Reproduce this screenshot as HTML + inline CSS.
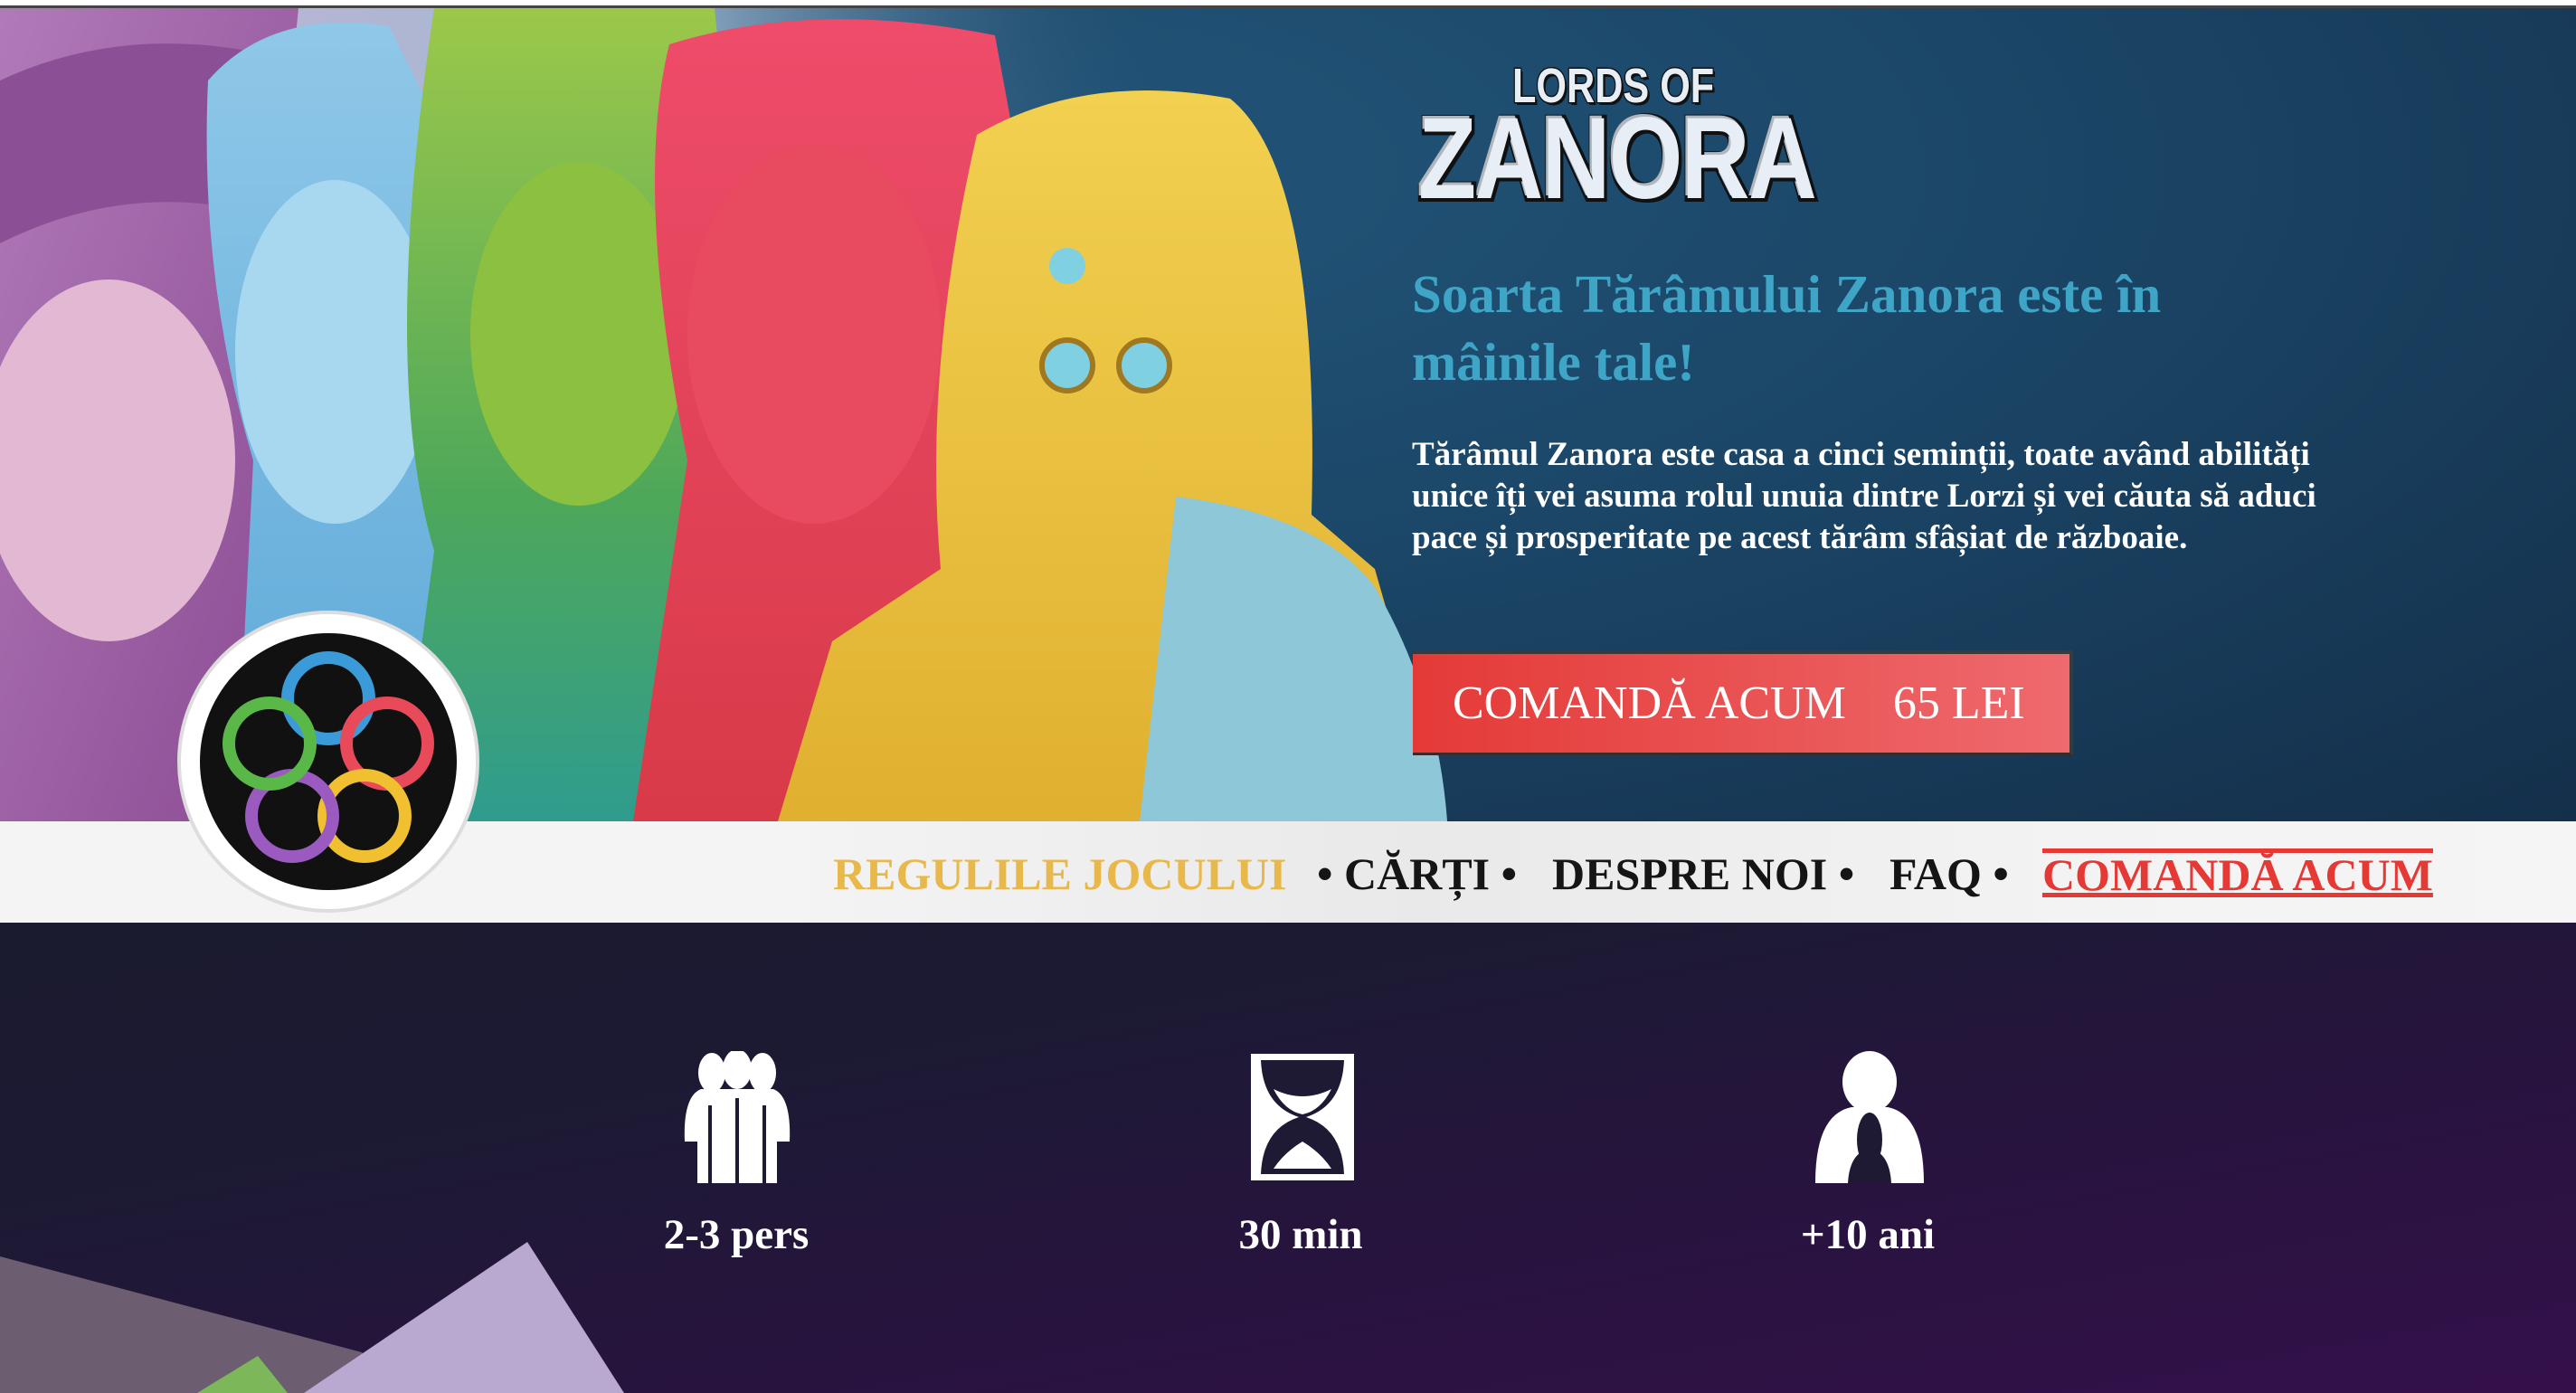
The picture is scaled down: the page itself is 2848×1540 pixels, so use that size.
<!DOCTYPE html>
<html><head><meta charset="utf-8"><style>
*{margin:0;padding:0;box-sizing:border-box}
html,body{width:2848px;height:1540px;overflow:hidden}
body{background:#1c1a30;font-family:"Liberation Serif",serif;position:relative}
.top{position:absolute;left:0;top:0;width:2848px;height:9px;background:#fff;border-bottom:3px solid #444}
.hero{position:absolute;left:0;top:9px;width:2848px;height:899px;background:radial-gradient(ellipse at 40% 20%,#225579 0%,#1b4667 45%,#142f4a 100%);overflow:hidden}
.nav{position:absolute;left:0;top:908px;width:2848px;height:112px;background:linear-gradient(90deg,#f4f4f4 0%,#f4f4f4 30%,#e9e9e9 55%,#f3f3f3 80%,#f5f5f5 100%);overflow:hidden}
.bottom{position:absolute;left:0;top:1020px;width:2848px;height:520px;background:linear-gradient(170deg,#1b1b2f 0%,#1c1a33 30%,#28133f 65%,#34104a 100%);overflow:hidden}
.logo1{position:absolute;left:1672px;top:64px;font:bold 54px "Liberation Sans",sans-serif;color:#e8eef5;-webkit-text-stroke:3px #0d1216;paint-order:stroke fill;text-shadow:3px 3px 0 #111;transform:scaleX(.8);transform-origin:left}
.logo2{position:absolute;left:1568px;top:102px;font:bold 128px "Liberation Sans",sans-serif;color:#e8eef5;-webkit-text-stroke:8px #0d1216;paint-order:stroke fill;text-shadow:4px 4px 0 #111,-3px -3px 0 #b0b6bd;transform:scaleX(.82);transform-origin:left;letter-spacing:-2px}
h1{position:absolute;left:1561px;top:288px;width:1000px;font:bold 59px/75px "Liberation Serif",serif;color:#3ea5c6}
p{position:absolute;left:1561px;top:480px;width:1070px;font:bold 37px/46px "Liberation Serif",serif;color:#fff}
.btn{position:absolute;left:1562px;top:719px;width:730px;height:116px;background:linear-gradient(90deg,#e43a37,#ee6a6e);border-top:4px solid #3a3a3a;border-right:4px solid #3a3a3a;border-bottom:3px solid #3a2a2a;color:#fff;font:52px/109px "Liberation Serif",serif;padding-left:44px;white-space:pre}
.nav span{position:absolute;top:30px;font:bold 50px/56px "Liberation Serif",serif;color:#151515;white-space:pre}
.stat{position:absolute;top:1338px;width:300px;text-align:center;font:bold 47px "Liberation Serif",serif;color:#fff}
</style></head><body>
<div class="top"></div>
<div class="hero">
<svg width="1600" height="899" style="position:absolute;left:0;top:0">
<defs>
<linearGradient id="pu" x1="0" y1="0" x2="1" y2="1"><stop offset="0" stop-color="#b07ab8"/><stop offset="1" stop-color="#8b4a92"/></linearGradient>
<linearGradient id="bl" x1="0" y1="0" x2="0" y2="1"><stop offset="0" stop-color="#8fc8e8"/><stop offset="1" stop-color="#5ca8d8"/></linearGradient>
<linearGradient id="gr" x1="0" y1="0" x2="0" y2="1"><stop offset="0" stop-color="#9cc84a"/><stop offset=".6" stop-color="#4ea85a"/><stop offset="1" stop-color="#2f9c8e"/></linearGradient>
<linearGradient id="rd" x1="0" y1="0" x2="0" y2="1"><stop offset="0" stop-color="#ee4c6a"/><stop offset="1" stop-color="#d83a48"/></linearGradient>
<linearGradient id="ye" x1="0" y1="0" x2="0" y2="1"><stop offset="0" stop-color="#f2d050"/><stop offset="1" stop-color="#e0b030"/></linearGradient>
<linearGradient id="bg" x1="0" y1="0" x2="1" y2="0"><stop offset="0" stop-color="#c8b6d6"/><stop offset=".55" stop-color="#9fb6d0"/><stop offset="1" stop-color="#1d4a6b" stop-opacity="0"/></linearGradient>
</defs>
<rect width="1300" height="899" fill="url(#bg)"/>
<path d="M0 0H330L300 300 290 899H0Z" fill="url(#pu)"/>
<ellipse cx="120" cy="500" rx="140" ry="200" fill="#e3b8d2"/>
<path d="M0 80Q150 10 330 60L330 240Q160 180 0 260Z" fill="#8a4f94"/>
<path d="M230 80Q300 0 430 20L520 200 540 899H260L280 500Q220 300 230 80Z" fill="url(#bl)"/>
<ellipse cx="370" cy="380" rx="110" ry="190" fill="#a8d8f0"/>
<path d="M480 0H790L820 300 760 899H440L480 600Q420 400 480 0Z" fill="url(#gr)"/>
<ellipse cx="640" cy="360" rx="120" ry="190" fill="#8cc040"/>
<path d="M740 40Q900 -10 1100 30L1150 300 1000 899H700L760 500Q700 200 740 40Z" fill="url(#rd)"/>
<ellipse cx="900" cy="360" rx="140" ry="210" fill="#e84a60"/>
<path d="M1080 140Q1200 70 1360 100Q1460 180 1450 560L1520 620 1600 899H860L920 700 1040 620Q1020 400 1080 140Z" fill="url(#ye)"/>
<path d="M1300 540Q1460 560 1520 640 1590 760 1600 899H1260Z" fill="#8ec8d8"/>
<circle cx="1180" cy="395" r="28" fill="#7fd0e0" stroke="#a07820" stroke-width="6"/>
<circle cx="1265" cy="395" r="28" fill="#7fd0e0" stroke="#a07820" stroke-width="6"/>
<circle cx="1180" cy="285" r="20" fill="#7fd0e0"/>
</svg>
</div>
<div class="logo1">LORDS OF</div>
<div class="logo2">ZANORA</div>
<h1>Soarta Tărâmului Zanora este în mâinile tale!</h1>
<p>Tărâmul Zanora este casa a cinci seminții, toate având abilități unice îți vei asuma rolul unuia dintre Lorzi și vei căuta să aduci pace și prosperitate pe acest tărâm sfâșiat de războaie.</p>
<div class="btn">COMANDĂ ACUM    65 LEI</div>
<div class="nav">
<span style="left:921px;color:#e9b84a">REGULILE JOCULUI</span>
<span style="left:1456px">• CĂRȚI •</span>
<span style="left:1716px">DESPRE NOI •</span>
<span style="left:2089px">FAQ •</span>
<span style="left:2258px;color:#e53935;text-decoration:underline;border-top:5px solid #e53935;line-height:48px;top:30px">COMANDĂ ACUM</span>
</div>
<svg width="340" height="340" style="position:absolute;left:193px;top:672px">
<circle cx="170" cy="170" r="165" fill="#fff" stroke="#ddd" stroke-width="4"/>
<circle cx="170" cy="170" r="142" fill="#111"/>
<g fill="none" stroke-width="14">
<circle cx="170" cy="100" r="45" stroke="#3b9ad8"/>
<circle cx="235" cy="150" r="45" stroke="#e84a5a"/>
<circle cx="210" cy="230" r="45" stroke="#f0c030"/>
<circle cx="130" cy="230" r="45" stroke="#9a5ac0"/>
<circle cx="105" cy="150" r="45" stroke="#5ab848"/>
</g></svg>
<div class="bottom">
<svg width="800" height="520" style="position:absolute;left:0;top:0">
<path d="M0 369L400 475 440 520H0Z" fill="#6c5e70"/>
<path d="M583 353L690 520H336Z" fill="#b9a8d0"/>
<path d="M218 520L285 479 318 520Z" fill="#7cb85a"/>
</svg>
<svg width="120" height="146" viewBox="0 0 120 146" style="position:absolute;left:755px;top:142px" fill="#fff">
<ellipse cx="32" cy="24" rx="15" ry="22"/><ellipse cx="88" cy="24" rx="15" ry="22"/><ellipse cx="60" cy="20" rx="16" ry="22"/>
<path d="M2 100Q0 50 20 42H100Q120 50 118 100H104V146H16V100Z"/>
<path d="M30 60V146M60 52V146M90 60V146" stroke="#1f1a34" stroke-width="4"/>
</svg>
<svg width="120" height="146" viewBox="0 0 120 146" style="position:absolute;left:1380px;top:142px">
<path d="M3 3H117V143H3Z" fill="#fff"/>
<path d="M14 10H106Q104 60 64 73Q104 86 106 136H14Q16 86 56 73Q16 60 14 10Z" fill="#1e1a34"/>
<path d="M28 42Q60 58 92 42Q80 66 60 70Q40 66 28 42ZM60 100Q80 112 92 130H28Q40 112 60 100Z" fill="#fff"/>
</svg>
<svg width="120" height="146" viewBox="0 0 120 146" style="position:absolute;left:2007px;top:142px" fill="#fff">
<ellipse cx="60" cy="34" rx="30" ry="34"/>
<path d="M0 146Q0 70 40 62H80Q120 70 120 146Z"/>
<ellipse cx="60" cy="98" rx="14" ry="30" fill="#1f1a34"/>
<path d="M36 146Q38 112 60 108Q82 112 84 146Z" fill="#1f1a34"/>
</svg>
</div>
<div class="stat" style="left:664px">2-3 pers</div>
<div class="stat" style="left:1288px">30 min</div>
<div class="stat" style="left:1915px">+10 ani</div>
</body></html>
